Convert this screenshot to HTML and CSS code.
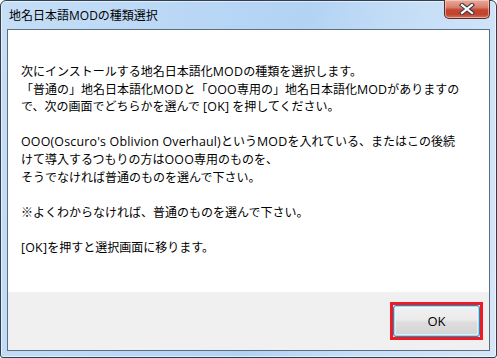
FILE: index.html
```html
<!DOCTYPE html>
<html lang="ja">
<head>
<meta charset="utf-8">
<title>地名日本語MODの種類選択</title>
<link rel="stylesheet" href="styles.css">
</head>
<body>
<div class="window">
  <div class="titlebar">
    <span class="title">地名日本語MODの種類選択</span>
    <div class="close">
      <svg width="16" height="12" viewBox="0 0 16 12">
        <path d="M3 2 L13 10 M13 2 L3 10" stroke="#3a3a46" stroke-width="4.2" stroke-linecap="square" fill="none"/>
        <path d="M3 2 L13 10 M13 2 L3 10" stroke="#ffffff" stroke-width="2.2" stroke-linecap="square" fill="none"/>
      </svg>
    </div>
  </div>
  <div class="client">
    <div class="content">
      <p>次にインストールする地名日本語化<span class="en">MOD</span>の種類を選択します。<br>「普通の」地名日本語化<span class="en">MOD</span>と「<span class="en">OOO</span>専用の」地名日本語化<span class="en">MOD</span>がありますの<br>で、次の画面でどちらかを選んで <span class="en">[OK]</span> を押してください。</p>
      <p><span class="en">OOO(Oscuro's Oblivion Overhaul)</span>という<span class="en">MOD</span>を入れている、またはこの後続<br>けて導入するつもりの方は<span class="en">OOO</span>専用のものを、<br>そうでなければ普通のものを選んで下さい。</p>
      <p>※よくわからなければ、普通のものを選んで下さい。</p>
      <p><span class="en">[OK]</span>を押すと選択画面に移ります。</p>
    </div>
    <div class="footer">
      <div class="mark">
        <button class="ok" type="button">OK</button>
      </div>
    </div>
  </div>
</div>
</body>
</html>
```
FILE: styles.css
```css
* { box-sizing: border-box; }
html, body { margin: 0; padding: 0; background: #ffffff; }
body { width: 497px; height: 358px; overflow: hidden; }

.window {
  width: 497px;
  height: 358px;
  border: 1px solid #2f3e50;
  border-radius: 6px 6px 3px 3px;
  background: linear-gradient(100deg, #c6def6 0%, #b9d7f5 35%, #b3d3f4 55%, #c6dff7 75%, #d5e7f8 100%);
  box-shadow: inset 0 0 0 1px rgba(255,255,255,0.55);
  display: flex;
  flex-direction: column;
  font-family: "Open Sans", "Noto Sans CJK JP", sans-serif;
}

.titlebar {
  height: 28px;
  flex: none;
  display: flex;
  justify-content: space-between;
  align-items: flex-start;
  padding: 0 6px 0 8px;
}
.title {
  font-size: 12px;
  line-height: 14px;
  margin-top: 8px;
  color: #000;
}
.close {
  width: 46px;
  height: 19px;
  margin-top: -1px;
  border: 1px solid #5a2a2a;
  border-top: none;
  border-radius: 0 0 5px 5px;
  background: linear-gradient(#e9a99a 0%, #d9826f 40%, #c4452f 55%, #c2432e 80%, #d4735c 100%);
  box-shadow: inset 0 0 0 1px rgba(255,220,210,0.55);
  display: flex;
  align-items: center;
  justify-content: center;
}

.client {
  flex: 1;
  margin: 0 6px 6px 6px;
  border: 1px solid #5c6e84;
  background: #ffffff;
  display: flex;
  flex-direction: column;
}

.content {
  height: 262px;
  flex: none;
  padding: 33px 0 0 13px;
  font-size: 12px;
  line-height: 17.6px;
  color: #000;
  white-space: nowrap;
}
.content p { margin: 0 0 17.6px 0; }
.en { font-size: 12.4px; letter-spacing: 0.2px; }

.footer {
  flex: 1;
  background: #f0f0f0;
  display: flex;
  justify-content: flex-end;
  align-items: flex-start;
  padding: 10px 6px 0 0;
}
.mark {
  width: 93px;
  height: 38px;
  border: 3px solid #ed1c24;
  display: flex;
}
.ok {
  flex: 1;
  margin: 0;
  border: 1px solid #3c7fb1;
  border-radius: 3px;
  background: linear-gradient(#f2f2f2 0%, #ebebeb 45%, #dddddd 55%, #d4d4d4 100%);
  box-shadow: inset 0 0 0 1px #8fe0f8, inset 0 0 0 2px rgba(255,255,255,0.5);
  font-family: "Open Sans", "Noto Sans CJK JP", sans-serif;
  font-size: 13px;
  color: #000;
  padding: 0;
}
```
